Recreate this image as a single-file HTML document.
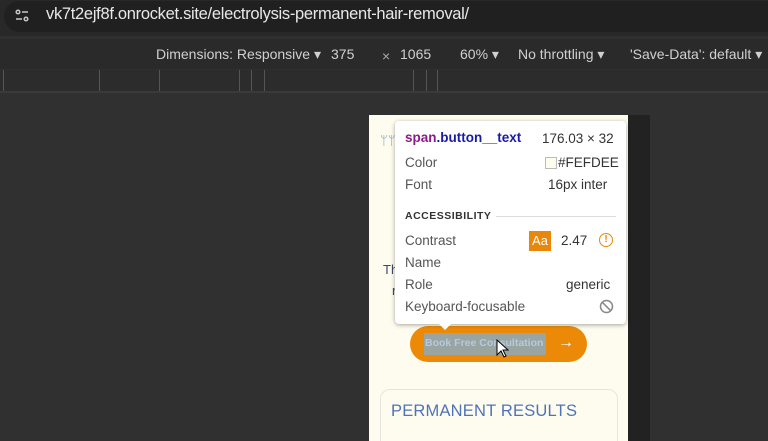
<!DOCTYPE html>
<html><head><style>
html,body{margin:0;width:768px;height:441px;overflow:hidden}
body{background:#303030;font-family:"Liberation Sans",sans-serif;position:relative}
.abs{position:absolute}
</style></head><body>
<div class="abs" style="left:0;top:0;width:768px;height:36px;background:#282828"></div>
<div class="abs" style="left:4px;top:1px;width:780px;height:31px;border-radius:16px;background:#202020"></div>
<svg class="abs" style="left:14px;top:8px" width="16" height="16" viewBox="0 0 16 16" fill="none" stroke="#c8c8c8" stroke-width="1.5"><circle cx="4" cy="4" r="1.8"/><path d="M8 4h6M2 11h6"/><circle cx="12" cy="11" r="1.8"/></svg>
<div class="abs" style="left:46px;top:5px;font-size:16.5px;color:#e8e8e8;letter-spacing:-0.3px">vk7t2ejf8f.onrocket.site/electrolysis-permanent-hair-removal/</div>
<div class="abs" style="left:0;top:39px;width:768px;height:30px;background:#2a2a2a"></div>
<div class="abs" style="top:46px;left:156px;font-size:14px;color:#d0d0d0;white-space:pre">Dimensions: Responsive ▾</div>
<div class="abs" style="top:46px;left:331px;font-size:14px;color:#d0d0d0">375</div>
<div class="abs" style="top:48px;left:382px;font-size:14px;color:#aaa">×</div>
<div class="abs" style="top:46px;left:400px;font-size:14px;color:#d0d0d0">1065</div>
<div class="abs" style="top:46px;left:460px;font-size:14px;color:#d0d0d0">60% ▾</div>
<div class="abs" style="top:46px;left:518px;font-size:14px;color:#d0d0d0">No throttling ▾</div>
<div class="abs" style="top:46px;left:630px;font-size:14px;color:#d0d0d0">'Save-Data': default ▾</div>
<div class="abs" style="left:0;top:70px;width:768px;height:21px;background:#2c2c2c;border-bottom:2px solid #3a3a3a"></div>
<div class="abs" style="left:3px;top:70px;width:1px;height:21px;background:#555"></div>
<div class="abs" style="left:99px;top:70px;width:1px;height:21px;background:#555"></div>
<div class="abs" style="left:159px;top:70px;width:1px;height:21px;background:#555"></div>
<div class="abs" style="left:239px;top:70px;width:1px;height:21px;background:#555"></div>
<div class="abs" style="left:251px;top:70px;width:1px;height:21px;background:#555"></div>
<div class="abs" style="left:264px;top:70px;width:1px;height:21px;background:#555"></div>
<div class="abs" style="left:413px;top:70px;width:1px;height:21px;background:#555"></div>
<div class="abs" style="left:426px;top:70px;width:1px;height:21px;background:#555"></div>
<div class="abs" style="left:437px;top:70px;width:1px;height:21px;background:#555"></div>
<div class="abs" style="left:628px;top:115px;width:22px;height:326px;background:#222"></div>
<div class="abs" style="left:369px;top:115px;width:259px;height:326px;background:#fdfcee"></div>
<div class="abs" style="left:380px;top:133px;font-size:13px;color:#7aa0c8">ᛘᛘ</div>
<div class="abs" style="left:383px;top:262px;font-size:13px;color:#3a4a6a">Th</div>
<div class="abs" style="left:392px;top:283px;font-size:13px;color:#3a4a6a">r</div>
<div class="abs" style="left:410px;top:326px;width:177px;height:36px;border-radius:18px;background:#ec8a07"></div>
<div class="abs" style="left:424px;top:333px;width:122px;height:22px;background:#9aa4a0"></div>
<div class="abs" style="left:425px;top:337px;font-size:10.5px;font-weight:bold;color:#b5c9e0">Book Free Consultation</div>
<div class="abs" style="left:558px;top:334px;font-size:16px;color:#fff">→</div>
<svg class="abs" style="left:496px;top:339px" width="14" height="20" viewBox="0 0 14 20"><path d="M1 1v15l4-4 3 6 2-1-3-6h5z" fill="#fff" stroke="#000" stroke-width="1"/></svg>
<div class="abs" style="left:380px;top:389px;width:236px;height:60px;border:1px solid #e6e6dc;border-radius:10px"></div>
<div class="abs" style="left:391px;top:402px;font-size:16.5px;color:#4f73b8;letter-spacing:0.2px">PERMANENT RESULTS</div>
<div class="abs" style="left:395px;top:121px;width:231px;height:203px;background:#fff;border-radius:4px;box-shadow:0 1px 4px rgba(0,0,0,.35)"></div>
<div class="abs" style="left:438px;top:323px;width:0;height:0;border-left:7px solid transparent;border-right:7px solid transparent;border-top:7px solid #fff"></div>
<div class="abs" style="left:405px;top:130px;font-size:13.5px;font-weight:bold;color:#8a1a8a">span<span style="color:#1a1aa6">.button__text</span></div>
<div class="abs" style="left:542px;top:131px;font-size:13.5px;color:#333">176.03 × 32</div>
<div class="abs" style="left:405px;top:155px;font-size:13.5px;color:#555">Color</div>
<div class="abs" style="left:545px;top:157px;width:10px;height:10px;border:1px solid #bbb;background:#fefdee"></div>
<div class="abs" style="left:558px;top:155px;font-size:13.5px;color:#333">#FEFDEE</div>
<div class="abs" style="left:548px;top:177px;font-size:13.5px;color:#333">16px inter</div>
<div class="abs" style="left:405px;top:177px;font-size:13.5px;color:#555">Font</div>
<div class="abs" style="left:405px;top:210px;font-size:10.5px;font-weight:bold;color:#333;letter-spacing:.5px">ACCESSIBILITY</div>
<div class="abs" style="left:496px;top:216px;width:120px;height:1px;background:#ddd"></div>
<div class="abs" style="left:405px;top:233px;font-size:13.5px;color:#555">Contrast</div>
<div class="abs" style="left:529px;top:231px;width:22px;height:20px;background:#e8870a;color:#fff;font-size:13px;text-align:center;line-height:20px">Aa</div>
<div class="abs" style="left:561px;top:233px;font-size:13.5px;color:#333">2.47</div>
<div class="abs" style="left:599px;top:233px;width:12px;height:12px;border:1.5px solid #e8870a;border-radius:50%;color:#e8870a;font-size:10px;font-weight:bold;text-align:center;line-height:12px">!</div>
<div class="abs" style="left:405px;top:255px;font-size:13.5px;color:#555">Name</div>
<div class="abs" style="left:405px;top:277px;font-size:13.5px;color:#555">Role</div>
<div class="abs" style="left:566px;top:277px;font-size:13.5px;color:#333">generic</div>
<div class="abs" style="left:405px;top:299px;font-size:13.5px;color:#555">Keyboard-focusable</div>
<svg class="abs" style="left:599px;top:299px" width="15" height="15" viewBox="0 0 15 15" fill="none" stroke="#888" stroke-width="1.5"><circle cx="7.5" cy="7.5" r="6"/><path d="M3.3 3.3l8.4 8.4"/></svg>
</body></html>
